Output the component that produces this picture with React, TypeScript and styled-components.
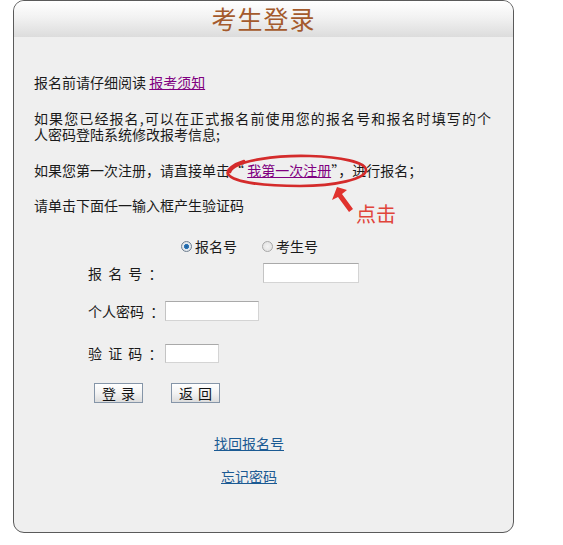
import React from "react";
import styled, { createGlobalStyle } from "styled-components";

const Global = createGlobalStyle`
  html, body { margin: 0; padding: 0; background: #fff; }
  body { font-family: "Noto Sans CJK SC", "Liberation Sans", sans-serif; font-size: 14px; color: #1a1a1a; }
`;

const Page = styled.div`
  width: 563px;
  height: 545px;
  padding-left: 13px;
  box-sizing: border-box;
`;

const Panel = styled.div`
  position: relative;
  width: 501px;
  height: 533px;
  box-sizing: border-box;
  border: 1px solid #5a5a5a;
  border-radius: 11px;
  background: #efefef;
  overflow: hidden;
`;

const Header = styled.div`
  height: 36px;
  background: linear-gradient(to bottom, #ffffff 0%, #f2f2f2 45%, #dcdcdc 100%);
  display: flex;
  align-items: center;
  justify-content: center;
`;

const Title = styled.h1`
  margin: -3px 0 0;
  font-size: 25px;
  font-weight: 400;
  color: #a45a2c;
  letter-spacing: 1px;
  line-height: 30px;
`;

const Content = styled.div`
  display: flex;
  flex-direction: column;
  padding: 0 19px 0 20px;
`;

const Para = styled.p<{ $mt: number }>`
  margin: ${(p) => p.$mt}px 0 0;
  font-size: 14px;
  line-height: 16px;
`;

const ParaLine = styled.span<{ $justify?: boolean }>`
  display: block;
  width: 457px;
  height: 16px;
  line-height: 16px;
  text-align: ${(p) => (p.$justify ? "justify" : "left")};
  text-align-last: ${(p) => (p.$justify ? "justify" : "auto")};
`;

const VisitedLink = styled.a`
  color: #800080;
  text-decoration: underline;
`;

const BlueLink = styled.a`
  color: #1b5a93;
  text-decoration: underline;
  font-size: 14px;
  line-height: 16px;
`;

const RadioRow = styled.div`
  display: flex;
  align-items: center;
  margin-top: 25px;
  padding-left: 147px;
  height: 16px;
  line-height: 16px;
`;

const RadioItem = styled.label`
  display: flex;
  align-items: center;
  gap: 3px;
  margin-right: 25px;
`;

const RadioDot = styled.span<{ $on?: boolean }>`
  width: 11px;
  height: 11px;
  border-radius: 50%;
  box-sizing: border-box;
  border: 1px solid ${(p) => (p.$on ? "#6f7f90" : "#a8a8a8")};
  background: ${(p) =>
    p.$on
      ? "radial-gradient(circle, #1f5d9a 0%, #2f78b8 35%, #e6ebf0 45%, #d6dbe0 100%)"
      : "radial-gradient(circle, #f4f4f4 0%, #dedede 100%)"};
`;

const FormRow = styled.div<{ $mt: number }>`
  display: flex;
  align-items: center;
  margin-top: ${(p) => p.$mt}px;
  padding-left: 54px;
  height: 20px;
`;

const Label = styled.span`
  width: 76px;
  white-space: pre;
  word-spacing: 3px;
  font-size: 14px;
`;

const Input = styled.input<{ $w: number; $ml: number; $h?: number }>`
  width: ${(p) => p.$w}px;
  height: ${(p) => p.$h ?? 20}px;
  margin: 0 0 0 ${(p) => p.$ml}px;
  padding: 0;
  box-sizing: border-box;
  background: #fff;
  border: 1px solid #d4d4d4;
  border-top-color: #a9a9a9;
  border-left-color: #c4c4c4;
  outline: none;
`;

const ButtonRow = styled.div`
  display: flex;
  gap: 28px;
  margin-top: 20px;
  padding-left: 60px;
`;

const Button = styled.button`
  width: 49px;
  height: 20px;
  padding: 0;
  box-sizing: border-box;
  border: 1px solid #8595a8;
  background: linear-gradient(to bottom, #ffffff 0%, #f3f3f3 50%, #dddddd 100%);
  font-family: "Noto Sans CJK SC", sans-serif;
  font-size: 14px;
  line-height: 18px;
  color: #111;
  white-space: pre;
  word-spacing: 2px;
`;

const LinkColumn = styled.div<{ $mt: number }>`
  width: 430px;
  text-align: center;
  margin-top: ${(p) => p.$mt}px;
  line-height: 16px;
`;

const Annotation = styled.svg`
  position: absolute;
  left: 186px;
  top: 149px;
  pointer-events: none;
`;

const ClickNote = styled.span`
  position: absolute;
  left: 342px;
  top: 200px;
  font-size: 20px;
  line-height: 26px;
  color: #e0443a;
`;

export default function App() {
  return (
    <>
      <Global />
      <Page>
        <Panel>
          <Header>
            <Title>考生登录</Title>
          </Header>
          <Content>
            <Para $mt={37}>
              报名前请仔细阅读 <VisitedLink href="#">报考须知</VisitedLink>
            </Para>
            <Para $mt={20}>
              <ParaLine $justify>如果您已经报名,可以在正式报名前使用您的报名号和报名时填写的个</ParaLine>
              <ParaLine>人密码登陆系统修改报考信息;</ParaLine>
            </Para>
            <Para $mt={20}>
              如果您第一次注册，请直接单击“ <VisitedLink href="#">我第一次注册</VisitedLink>”，进行报名；
            </Para>
            <Para $mt={19}>请单击下面任一输入框产生验证码</Para>
            <RadioRow>
              <RadioItem>
                <RadioDot $on />
                报名号
              </RadioItem>
              <RadioItem>
                <RadioDot />
                考生号
              </RadioItem>
            </RadioRow>
            <FormRow $mt={9}>
              <Label>{"报 名 号 ："}</Label>
              <Input $w={96} $ml={99} />
            </FormRow>
            <FormRow $mt={18}>
              <Label>{"个人密码 ："}</Label>
              <Input $w={94} $ml={1} />
            </FormRow>
            <FormRow $mt={22}>
              <Label>{"验 证 码 ："}</Label>
              <Input $w={54} $ml={1} $h={19} />
            </FormRow>
            <ButtonRow>
              <Button>{"登 录"}</Button>
              <Button>{"返 回"}</Button>
            </ButtonRow>
            <LinkColumn $mt={32}>
              <BlueLink href="#">找回报名号</BlueLink>
            </LinkColumn>
            <LinkColumn $mt={17}>
              <BlueLink href="#">忘记密码</BlueLink>
            </LinkColumn>
          </Content>
          <Annotation width="220" height="70" viewBox="0 0 220 70">
            <path
              d="M30 22 C 34 10, 80 5, 110 6 C 140 7, 166 12, 166 20 C 166 29, 135 36, 100 36 C 68 36, 34 33, 28 24 C 26 20, 34 14, 44 11"
              fill="none"
              stroke="#d42b2b"
              strokeWidth="2.6"
              strokeLinecap="round"
            />
            <path d="M137 37 L132 50 L138 47 L149 62 L153 59 L142 44 L147 40 Z" fill="#e0322e" />
          </Annotation>
          <ClickNote>点击</ClickNote>
        </Panel>
      </Page>
    </>
  );
}
